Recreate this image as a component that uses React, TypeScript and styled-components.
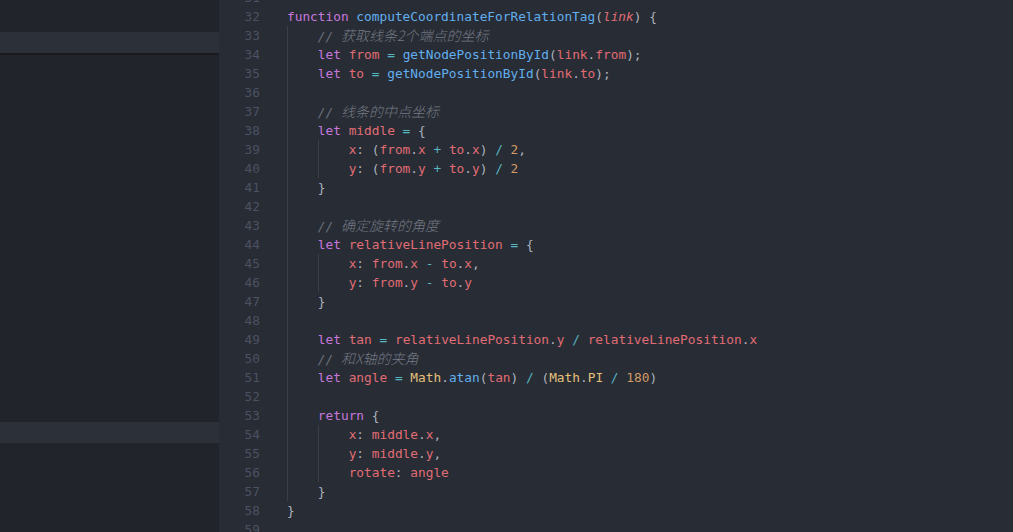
import React from "react";
import styled, { createGlobalStyle } from "styled-components";

const Global = createGlobalStyle`
  html, body { margin: 0; padding: 0; background: #282c34; overflow: hidden; }
  #root { width: 1013px; height: 532px; }
`;

const Window = styled.div`
  display: flex;
  width: 1013px;
  height: 532px;
  overflow: hidden;
`;

const Sidebar = styled.div`
  width: 219px;
  flex: none;
  background: #21252b;
  display: flex;
  flex-direction: column;
`;

const Spacer = styled.div<{ $h: number }>`
  height: ${(p) => p.$h}px;
  flex: none;
`;

const TreeRow = styled.div<{ $selected?: boolean }>`
  height: 21px;
  flex: none;
  background: ${(p) => (p.$selected ? "#2c3039" : "transparent")};
`;

const Divider = styled.div`
  height: 2px;
  flex: none;
  background: #181a1f;
`;

const Editor = styled.div`
  flex: 1;
  background: #282c34;
  display: flex;
  flex-direction: column;
  margin-top: -12px;
  font-family: "DejaVu Sans Mono", "Liberation Mono", monospace;
  font-size: 12.8px;
`;

const Line = styled.div`
  display: flex;
  height: 19px;
  line-height: 19px;
  flex: none;
`;

const LineNo = styled.div`
  width: 56px;
  flex: none;
  box-sizing: border-box;
  padding-right: 15px;
  text-align: right;
  color: #4b5263;
`;

const Code = styled.div`
  padding-left: 12px;
  white-space: pre;
  display: flex;
  align-items: stretch;
`;

const Indent = styled.span`
  display: inline-block;
  width: 4ch;
  flex: none;
  box-sizing: border-box;
  border-left: 1px solid #3b4048;
`;

const Text = styled.span`
  white-space: pre;
`;

const colors: Record<string, string> = {
  k: "#c678dd",
  f: "#61afef",
  v: "#e06c75",
  p: "#abb2bf",
  o: "#56b6c2",
  n: "#d19a66",
  c: "#e5c07b",
  m: "#6b717d",
  a: "#e06c75",
};

const Tok = styled.span<{ $k: string }>`
  color: ${(p) => colors[p.$k] || "#abb2bf"};
  font-style: ${(p) => (p.$k === "m" || p.$k === "a" ? "italic" : "normal")};
`;

const Cjk = styled.span`
  color: #737985;
  font-style: italic;
  font-weight: 300;
  font-size: 14px;
  font-family: "Noto Sans CJK SC", sans-serif;
`;

type T = [string, string];
type L = { n: number; ind: number; toks: T[] };

const cm = (s: string): T[] => [["m", "// "], ["cjk", s]];

const lines: L[] = [
  { n: 31, ind: 0, toks: [] },
  {
    n: 32,
    ind: 0,
    toks: [
      ["k", "function"],
      ["p", " "],
      ["f", "computeCoordinateForRelationTag"],
      ["p", "("],
      ["a", "link"],
      ["p", ") {"],
    ],
  },
  { n: 33, ind: 1, toks: cm("获取线条2个端点的坐标") },
  {
    n: 34,
    ind: 1,
    toks: [
      ["k", "let"],
      ["p", " "],
      ["v", "from"],
      ["p", " "],
      ["o", "="],
      ["p", " "],
      ["f", "getNodePositionById"],
      ["p", "("],
      ["v", "link"],
      ["p", "."],
      ["v", "from"],
      ["p", ");"],
    ],
  },
  {
    n: 35,
    ind: 1,
    toks: [
      ["k", "let"],
      ["p", " "],
      ["v", "to"],
      ["p", " "],
      ["o", "="],
      ["p", " "],
      ["f", "getNodePositionById"],
      ["p", "("],
      ["v", "link"],
      ["p", "."],
      ["v", "to"],
      ["p", ");"],
    ],
  },
  { n: 36, ind: 1, toks: [] },
  { n: 37, ind: 1, toks: cm("线条的中点坐标") },
  {
    n: 38,
    ind: 1,
    toks: [
      ["k", "let"],
      ["p", " "],
      ["v", "middle"],
      ["p", " "],
      ["o", "="],
      ["p", " {"],
    ],
  },
  {
    n: 39,
    ind: 2,
    toks: [
      ["v", "x"],
      ["p", ": ("],
      ["v", "from"],
      ["p", "."],
      ["v", "x"],
      ["p", " "],
      ["o", "+"],
      ["p", " "],
      ["v", "to"],
      ["p", "."],
      ["v", "x"],
      ["p", ") "],
      ["o", "/"],
      ["p", " "],
      ["n", "2"],
      ["p", ","],
    ],
  },
  {
    n: 40,
    ind: 2,
    toks: [
      ["v", "y"],
      ["p", ": ("],
      ["v", "from"],
      ["p", "."],
      ["v", "y"],
      ["p", " "],
      ["o", "+"],
      ["p", " "],
      ["v", "to"],
      ["p", "."],
      ["v", "y"],
      ["p", ") "],
      ["o", "/"],
      ["p", " "],
      ["n", "2"],
    ],
  },
  { n: 41, ind: 1, toks: [["p", "}"]] },
  { n: 42, ind: 1, toks: [] },
  { n: 43, ind: 1, toks: cm("确定旋转的角度") },
  {
    n: 44,
    ind: 1,
    toks: [
      ["k", "let"],
      ["p", " "],
      ["v", "relativeLinePosition"],
      ["p", " "],
      ["o", "="],
      ["p", " {"],
    ],
  },
  {
    n: 45,
    ind: 2,
    toks: [
      ["v", "x"],
      ["p", ": "],
      ["v", "from"],
      ["p", "."],
      ["v", "x"],
      ["p", " "],
      ["o", "-"],
      ["p", " "],
      ["v", "to"],
      ["p", "."],
      ["v", "x"],
      ["p", ","],
    ],
  },
  {
    n: 46,
    ind: 2,
    toks: [
      ["v", "y"],
      ["p", ": "],
      ["v", "from"],
      ["p", "."],
      ["v", "y"],
      ["p", " "],
      ["o", "-"],
      ["p", " "],
      ["v", "to"],
      ["p", "."],
      ["v", "y"],
    ],
  },
  { n: 47, ind: 1, toks: [["p", "}"]] },
  { n: 48, ind: 1, toks: [] },
  {
    n: 49,
    ind: 1,
    toks: [
      ["k", "let"],
      ["p", " "],
      ["v", "tan"],
      ["p", " "],
      ["o", "="],
      ["p", " "],
      ["v", "relativeLinePosition"],
      ["p", "."],
      ["v", "y"],
      ["p", " "],
      ["o", "/"],
      ["p", " "],
      ["v", "relativeLinePosition"],
      ["p", "."],
      ["v", "x"],
    ],
  },
  { n: 50, ind: 1, toks: cm("和X轴的夹角") },
  {
    n: 51,
    ind: 1,
    toks: [
      ["k", "let"],
      ["p", " "],
      ["v", "angle"],
      ["p", " "],
      ["o", "="],
      ["p", " "],
      ["c", "Math"],
      ["p", "."],
      ["f", "atan"],
      ["p", "("],
      ["v", "tan"],
      ["p", ") "],
      ["o", "/"],
      ["p", " ("],
      ["c", "Math"],
      ["p", "."],
      ["c", "PI"],
      ["p", " "],
      ["o", "/"],
      ["p", " "],
      ["n", "180"],
      ["p", ")"],
    ],
  },
  { n: 52, ind: 1, toks: [] },
  { n: 53, ind: 1, toks: [["k", "return"], ["p", " {"]] },
  {
    n: 54,
    ind: 2,
    toks: [
      ["v", "x"],
      ["p", ": "],
      ["v", "middle"],
      ["p", "."],
      ["v", "x"],
      ["p", ","],
    ],
  },
  {
    n: 55,
    ind: 2,
    toks: [
      ["v", "y"],
      ["p", ": "],
      ["v", "middle"],
      ["p", "."],
      ["v", "y"],
      ["p", ","],
    ],
  },
  {
    n: 56,
    ind: 2,
    toks: [
      ["v", "rotate"],
      ["p", ": "],
      ["v", "angle"],
    ],
  },
  { n: 57, ind: 1, toks: [["p", "}"]] },
  { n: 58, ind: 0, toks: [["p", "}"]] },
  { n: 59, ind: 0, toks: [] },
];

export default function App() {
  return (
    <>
      <Global />
      <Window>
        <Sidebar>
          <Spacer $h={32} />
          <TreeRow $selected />
          <Divider />
          <Spacer $h={367} />
          <TreeRow $selected />
        </Sidebar>
        <Editor>
          {lines.map((l) => (
            <Line key={l.n}>
              <LineNo>{l.n}</LineNo>
              <Code>
                {Array.from({ length: l.ind }).map((_, i) => (
                  <Indent key={i} />
                ))}
                <Text>
                  {l.toks.map(([k, s], i) =>
                    k === "cjk" ? (
                      <Cjk key={i}>{s}</Cjk>
                    ) : (
                      <Tok key={i} $k={k}>
                        {s}
                      </Tok>
                    )
                  )}
                </Text>
              </Code>
            </Line>
          ))}
        </Editor>
      </Window>
    </>
  );
}
